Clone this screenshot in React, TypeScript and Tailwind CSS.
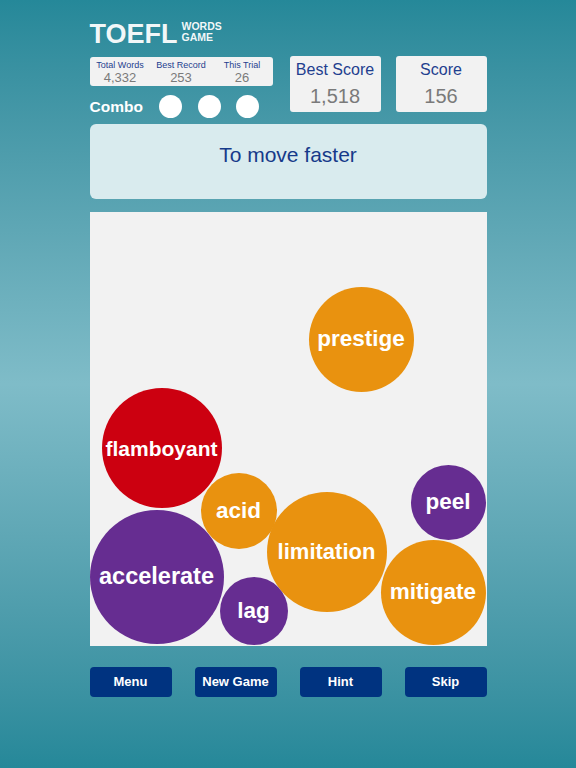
import * as React from "react";

type Bubble = {
  word: string;
  color: string;
  pos: string;
  size: string;
  text: string;
};

// positions are the content here: each word sits where it fell on the board
const bubbles: Bubble[] = [
  { word: "prestige", color: "bg-[#e9920f]", pos: "left-[219px] top-[75px]", size: "w-[105px] h-[105px]", text: "text-[22.5px]" },
  { word: "flamboyant", color: "bg-[#cc0010]", pos: "left-[12px] top-[176px]", size: "w-[120px] h-[120px]", text: "text-[21px]" },
  { word: "acid", color: "bg-[#e9920f]", pos: "left-[111px] top-[261px]", size: "w-[76px] h-[76px]", text: "text-[22.5px]" },
  { word: "peel", color: "bg-[#662d91]", pos: "left-[321px] top-[253px]", size: "w-[75px] h-[75px]", text: "text-[22.5px]" },
  { word: "limitation", color: "bg-[#e9920f]", pos: "left-[177px] top-[280px]", size: "w-[120px] h-[120px]", text: "text-[22px]" },
  { word: "accelerate", color: "bg-[#662d91]", pos: "left-[0px] top-[298px]", size: "w-[134px] h-[134px]", text: "text-[23.5px]" },
  { word: "mitigate", color: "bg-[#e9920f]", pos: "left-[291px] top-[328px]", size: "w-[105px] h-[105px]", text: "text-[22.5px]" },
  { word: "lag", color: "bg-[#662d91]", pos: "left-[130px] top-[365px]", size: "w-[68px] h-[68px]", text: "text-[22.5px]" },
];

const stats = [
  { label: "Total Words", value: "4,332" },
  { label: "Best Record", value: "253" },
  { label: "This Trial", value: "26" },
];

const buttons = ["Menu", "New Game", "Hint", "Skip"];

function ScoreBox({ label, value, className }: { label: string; value: string; className?: string }) {
  return (
    <div className={`h-[56px] w-[91px] rounded-[3px] bg-[#f2f2f2] pt-[4px] text-center ${className ?? ""}`}>
      <div className="text-[16px] leading-[20px] text-[#1f3f8f]">{label}</div>
      <div className="mt-[4px] text-[20px] leading-[24px] text-[#7a7a7a]">{value}</div>
    </div>
  );
}

export default function App() {
  return (
    <div className="min-h-screen bg-gradient-to-b from-[#258899] via-[#7fbcc8] to-[#258899] font-['Liberation_Sans',Arial,sans-serif]">
      <div className="mx-auto w-[397px] pt-[20px]">
        {/* title */}
        <div className="flex h-[28px] items-start">
          <span className="text-[27px] font-bold leading-[28px] text-white/95">TOEFL</span>
          <div className="ml-[4px] mt-[1px] flex flex-col text-[10.5px] font-bold leading-[11px] text-white/95">
            <span>WORDS</span>
            <span>GAME</span>
          </div>
        </div>

        {/* header */}
        <div className="mt-[9px] flex items-start">
          <div className="w-[183px]">
            <div className="grid h-[29px] grid-cols-3 rounded-[3px] bg-[#f2f2f2] pt-[3px] text-center">
              {stats.map((s) => (
                <div key={s.label} className="flex flex-col">
                  <span className="text-[9px] leading-[11px] text-[#1f3f8f]">{s.label}</span>
                  <span className="text-[13px] leading-[14px] text-[#7a7a7a]">{s.value}</span>
                </div>
              ))}
            </div>
            <div className="mt-[9px] flex h-[23px] items-center">
              <span className="text-[15.5px] font-bold leading-none text-white">Combo</span>
              <span className="ml-[16px] h-[23px] w-[23px] rounded-full bg-white" />
              <span className="ml-[16px] h-[23px] w-[23px] rounded-full bg-white" />
              <span className="ml-[15px] h-[23px] w-[23px] rounded-full bg-white" />
            </div>
          </div>
          <ScoreBox label="Best Score" value="1,518" className="ml-[17px] -mt-[1px]" />
          <ScoreBox label="Score" value="156" className="ml-[15px] -mt-[1px]" />
        </div>

        {/* message */}
        <div className="mt-[6px] h-[75px] rounded-[6px] bg-[#d9ebee] pt-[19px] text-center">
          <span className="text-[21px] leading-[24px] text-[#163a8a]">To move faster</span>
        </div>

        {/* board */}
        <div className="relative mt-[13px] h-[434px] overflow-hidden bg-[#f2f2f2]">
          {bubbles.map((b) => (
            <div
              key={b.word}
              className={`absolute flex items-center justify-center rounded-full ${b.color} ${b.pos} ${b.size}`}
            >
              <span className={`${b.text} font-bold leading-none text-white`}>{b.word}</span>
            </div>
          ))}
        </div>

        {/* controls */}
        <div className="mt-[21px] flex justify-between">
          {buttons.map((label) => (
            <button
              key={label}
              type="button"
              className="h-[30px] w-[82px] rounded-[4px] bg-[#003380] text-[13px] font-bold text-white"
            >
              {label}
            </button>
          ))}
        </div>
      </div>
    </div>
  );
}
